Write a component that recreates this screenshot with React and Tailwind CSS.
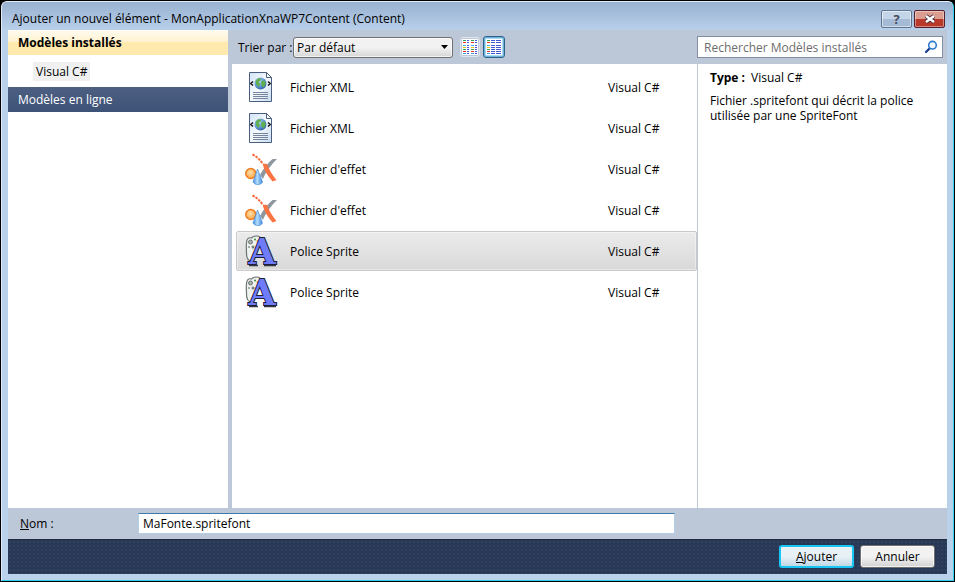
import { useState } from "react"

const items = [
  { id: 1, name: "Fichier XML", language: "Visual C#", icon: XmlIcon },
  { id: 2, name: "Fichier XML", language: "Visual C#", icon: XmlIcon },
  { id: 3, name: "Fichier d'effet", language: "Visual C#", icon: EffectIcon },
  { id: 4, name: "Fichier d'effet", language: "Visual C#", icon: EffectIcon },
  { id: 5, name: "Police Sprite", language: "Visual C#", icon: SpriteFontIcon },
  { id: 6, name: "Police Sprite", language: "Visual C#", icon: SpriteFontIcon },
]

function XmlIcon() {
  return (
    <svg viewBox="0 0 32 32" className="h-8 w-8 shrink-0" aria-hidden="true">
      <defs>
        <linearGradient id="page" x1="0" y1="0" x2="1" y2="1">
          <stop offset="0" stopColor="#d3e3f6" />
          <stop offset="0.5" stopColor="#f6faff" />
          <stop offset="1" stopColor="#c6daf0" />
        </linearGradient>
        <radialGradient id="globe" cx="0.35" cy="0.3" r="0.75">
          <stop offset="0" stopColor="#c2dcf8" />
          <stop offset="0.6" stopColor="#5f94d6" />
          <stop offset="1" stopColor="#2f5ca4" />
        </radialGradient>
      </defs>
      <path d="M4.5 1.5h17l5 5v24h-22z" fill="url(#page)" stroke="#4a5f80" />
      <path d="M21.5 1.5v5h5z" fill="#fff" stroke="#4a5f80" />
      <circle cx="15.5" cy="12.5" r="6" fill="url(#globe)" />
      <path d="M10.5 10l2.5-2.800 3.500.300-1 2-2 1.500 1.800 2-1.800 3-2.500-2.500zM17 9.500l3 .500.800 3-2.300 3.500-2-2-.500-3z" fill="#5fae50" />
      <path d="M8 10.500l-2.200 2 2.200 2M23 10.500l2.200 2-2.200 2" fill="none" stroke="#111" strokeWidth="1.500" />
      <path d="M8 21.500h15M8 23.500h15M8 25.500h15M8 27.500h15" stroke="#76859b" />
    </svg>
  )
}

function EffectIcon() {
  return (
    <svg viewBox="0 0 32 32" className="h-8 w-8 shrink-0" aria-hidden="true">
      <defs>
        <linearGradient id="cone" x1="0" x2="1">
          <stop offset="0" stopColor="#3b8de0" />
          <stop offset="0.45" stopColor="#b5dcfb" />
          <stop offset="1" stopColor="#3b86d8" />
        </linearGradient>
        <radialGradient id="ball" cx="0.45" cy="0.4" r="0.6">
          <stop offset="0" stopColor="#ffe0ac" />
          <stop offset="1" stopColor="#ffa642" />
        </radialGradient>
      </defs>
      <path d="M32 6h-4.500c-4.500 4-9.500 10-12.500 16l3 4c3-8 9-15 14-20z" fill="#8e969e" />
      <path d="M17.500 10.500l4.500.500c2 5 5 11 9.500 16l-4 1.500c-4-5-8-10-10-18z" fill="#fa7342" />
      <path d="M7.500 1.500q6 3 10 9" fill="none" stroke="#f8693a" strokeWidth="2" strokeDasharray="2.500 1" />
      <circle cx="5.800" cy="20.500" r="5" fill="url(#ball)" stroke="#ec7d22" strokeWidth="1.500" />
      <path d="M12.500 16l5 13c-2 3.500-7.500 3.500-9.500 0z" fill="url(#cone)" stroke="#4a8fdc" strokeWidth="0.700" />
    </svg>
  )
}

function SpriteFontIcon() {
  return (
    <svg viewBox="0 0 32 32" className="h-8 w-8 shrink-0 overflow-visible" aria-hidden="true">
      <path d="M1.500 8c0-4 2-6 5-5 1-1 3-2 5-2 3 0 5 2 5 5 0 5-4 7-6 10-2 4-1 9-4 10-4 0-5-4-5-8 0-4-.5-7 0-10z" fill="#eef2f0" stroke="#6b7572" strokeWidth="1.200" />
      <circle cx="5.500" cy="7" r="2" fill="#aab4b1" stroke="#59615f" strokeWidth="0.800" />
      <circle cx="8" cy="12" r="1.500" fill="#77807d" />
      <circle cx="10" cy="4.500" r="1" fill="#3c8c3c" />
      <circle cx="12.500" cy="6" r="1" fill="#d7a520" />
      <circle cx="4" cy="12" r="1" fill="#8b9692" />
      <path d="M4 30.500h9M19 30.500h12" stroke="#35373f" strokeWidth="1.500" />
      <text x="17" y="29" textAnchor="middle" fontFamily="DejaVu Serif, serif" fontWeight="700" fontSize="35" fill="#6f7cfa" stroke="#1f2038" strokeWidth="2" paintOrder="stroke">A</text>
    </svg>
  )
}

function ColumnsIcon({ wide }) {
  const rows = [
    [1, "#2f9e58"],
    [3, "#f03020"],
    [6, "#4aaaf0"],
    [8, "#e0cc10"],
    [10, "#3aa050"],
    [12, "#f03020"],
    [14, "#3a9fe8"],
  ]
  return (
    <svg viewBox="0 0 16 16" className="h-4 w-4 shrink-0" shapeRendering="crispEdges" aria-hidden="true">
      <path d="M0 0h16v16H0z" fill="#fff" />
      {rows.map(([y, color]) => (
        <g key={y}>
          <path d={wide ? `M1 ${y}h3v1h-3z` : `M1 ${y}h3v1h-3zM9 ${y}h3v1h-3z`} fill={color} />
          <path d={wide ? `M5 ${y}h4v1h-4zM10 ${y}h5v1h-5z` : `M5 ${y}h2v1h-2zM13 ${y}h2v1h-2z`} fill="#4858d0" />
        </g>
      ))}
    </svg>
  )
}

function SearchIcon() {
  return (
    <svg viewBox="0 0 14 14" className="h-3.5 w-3.5" aria-hidden="true">
      <path d="M2 12l3.500-3.500" stroke="#1c3f8f" strokeWidth="2.300" strokeLinecap="round" />
      <circle cx="8.500" cy="5.200" r="3.800" fill="#f4faff" stroke="#2f7ccc" strokeWidth="1.600" />
    </svg>
  )
}

function TitleBar() {
  return (
    <header className="flex h-7 items-start justify-between bg-linear-to-b from-[#98b1d0] to-[#b8d0ea] pr-2 pl-2.5">
      <h1 className="pt-[7px] leading-5">Ajouter un nouvel élément - MonApplicationXnaWP7Content (Content)</h1>
      <div className="flex gap-[2px] pt-2">
        <button aria-label="Aide" className="flex h-[18px] w-[31px] items-center justify-center rounded-xs border border-[#5f7590] bg-linear-to-b from-[#c5d5e8] from-50% to-[#a5bbd5] to-50% text-[13px] font-bold text-[#444c5c] inset-ring inset-ring-white/50">
          ?
        </button>
        <button aria-label="Fermer" className="flex h-[18px] w-[31px] items-center justify-center rounded-xs border border-[#55202a] bg-linear-to-b from-[#dc9d91] from-50% to-[#b93a2a] to-50% inset-ring inset-ring-white/40">
          <svg viewBox="0 0 12 10" className="h-2.5 w-3" aria-hidden="true">
            <path d="M2 2l8 6M10 2l-8 6" stroke="#4b3541" strokeWidth="4.200" />
            <path d="M2 2l8 6M10 2l-8 6" stroke="#fff" strokeWidth="2.400" />
          </svg>
        </button>
      </div>
    </header>
  )
}

function Sidebar() {
  return (
    <nav className="w-[220px] shrink-0 bg-white">
      <button className="block h-[25px] w-full bg-linear-to-b from-[#fffbf0] from-0% via-[#fff1cd] via-50% to-[#ffe9ac] to-50% px-2.5 text-left font-bold">
        Modèles installés
      </button>
      <div className="flex h-8 items-center px-[25px]">
        <button className="h-[19px] bg-[#f0f0f0] px-[3px]">Visual C#</button>
      </div>
      <button className="block h-[25px] w-full bg-linear-to-b from-[#4d6082] to-[#3d5277] px-2.5 text-left text-white">
        Modèles en ligne
      </button>
    </nav>
  )
}

function Toolbar() {
  return (
    <div className="flex h-[34px] items-center pr-1 pl-1.5">
      <label htmlFor="sort" className="w-[55px] whitespace-nowrap">Trier par :</label>
      <div className="relative">
        <select id="sort" className="block h-[21px] w-40 appearance-none rounded-[3px] border border-[#707070] bg-linear-to-b from-[#f2f2f2] from-50% to-[#d6d6d6] pl-[3px] inset-ring inset-ring-white/70">
          <option>Par défaut</option>
        </select>
        <svg viewBox="0 0 7 4" className="pointer-events-none absolute top-2 right-[5px] h-1 w-[7px]" aria-hidden="true">
          <path d="M0 0h7L3.500 4z" />
        </svg>
      </div>
      <button aria-label="Petites icônes" className="ml-[7px] flex h-5 w-5 items-center justify-center rounded-[3px] border border-[#dfe5ee]">
        <ColumnsIcon />
      </button>
      <button aria-label="Icônes moyennes" aria-pressed="true" className="ml-[3px] flex h-[22px] w-[22px] items-center justify-center rounded-[3px] border border-[#2c628b] bg-[#a9dbf5] inset-ring inset-ring-[#6fb0d8]">
        <ColumnsIcon wide />
      </button>
      <label className="ml-auto flex h-[22px] w-[246px] items-center border border-[#828ea1] bg-white pr-1 pl-1.5">
        <input type="search" aria-label="Rechercher" placeholder="Rechercher Modèles installés" className="min-w-0 flex-1 outline-none placeholder:text-[#6d6d6d]" />
        <SearchIcon />
      </label>
    </div>
  )
}

function TemplateList({ selected, onSelect }) {
  return (
    <ul className="flex flex-1 flex-col gap-px pt-[3px] pl-1">
      {items.map(({ id, name, language, icon: Icon }) => (
        <li key={id}>
          <button
            aria-pressed={id === selected}
            onClick={() => onSelect(id)}
            className={
              id === selected
                ? "flex h-10 w-full items-center rounded-xs border border-[#c9c9c9] bg-linear-to-b from-[#ebebeb] to-[#d9d9d9] pr-[38px] pl-2 text-left inset-ring inset-ring-white/40"
                : "flex h-10 w-full items-center border border-transparent pr-[38px] pl-2 text-left"
            }
          >
            <Icon />
            <span className="ml-[13px] flex-1">{name}</span>
            <span className="w-[50px] whitespace-nowrap">{language}</span>
          </button>
        </li>
      ))}
    </ul>
  )
}

export default function App() {
  const [selected, setSelected] = useState(5)

  return (
    <div className="min-h-screen bg-black p-px font-['Open_Sans','Noto_Sans',sans-serif] text-[12px] leading-[15px] text-black">
      <div className="flex min-h-[calc(100vh-2px)] flex-col overflow-hidden rounded-t-md border border-[#e3eefa] border-r-[#2fd0ef] border-b-[#2fd0ef] bg-[#b9d1ea]">
        <TitleBar />
        <main className="mx-1.5 mb-1.5 flex flex-1 flex-col bg-[#bcc7d8]">
          <div className="flex flex-1 gap-1">
            <Sidebar />
            <div className="flex flex-1 flex-col">
              <Toolbar />
              <div className="flex flex-1 bg-white">
                <TemplateList selected={selected} onSelect={setSelected} />
                <aside className="w-[250px] shrink-0 border-l border-[#bcc7d8] px-3 pt-1.5">
                  <p>
                    <strong className="mr-1.5">Type :</strong>Visual C#
                  </p>
                  <p className="mt-2">Fichier .spritefont qui décrit la police utilisée par une SpriteFont</p>
                </aside>
              </div>
            </div>
          </div>
          <div className="flex h-[31px] items-center pl-3">
            <label htmlFor="name" className="w-[118px]">
              <u>N</u>om :
            </label>
            <input id="name" defaultValue="MaFonte.spritefont" className="mr-[272px] h-[21px] flex-1 border border-[#b5cfe7] border-t-[#3d7bad] bg-white px-1 outline-none" />
          </div>
          <footer className="flex h-[35px] items-start justify-end gap-1.5 border-t border-[#1e2a40] bg-[#293955] bg-[radial-gradient(#2f4161_1px,transparent_1px)] bg-size-[4px_4px] pt-[5px] pr-3">
            <button className="h-[23px] w-[75px] rounded-[3px] border-2 border-[#18c5f5] bg-linear-to-b from-[#e8f1f6] from-50% to-[#c2d7e5]">
              <u>A</u>jouter
            </button>
            <button className="h-[23px] w-[75px] rounded-[3px] border border-[#707070] bg-linear-to-b from-[#f2f2f2] from-50% to-[#d2d2d2] inset-ring inset-ring-white/70">
              Annuler
            </button>
          </footer>
        </main>
      </div>
    </div>
  )
}
